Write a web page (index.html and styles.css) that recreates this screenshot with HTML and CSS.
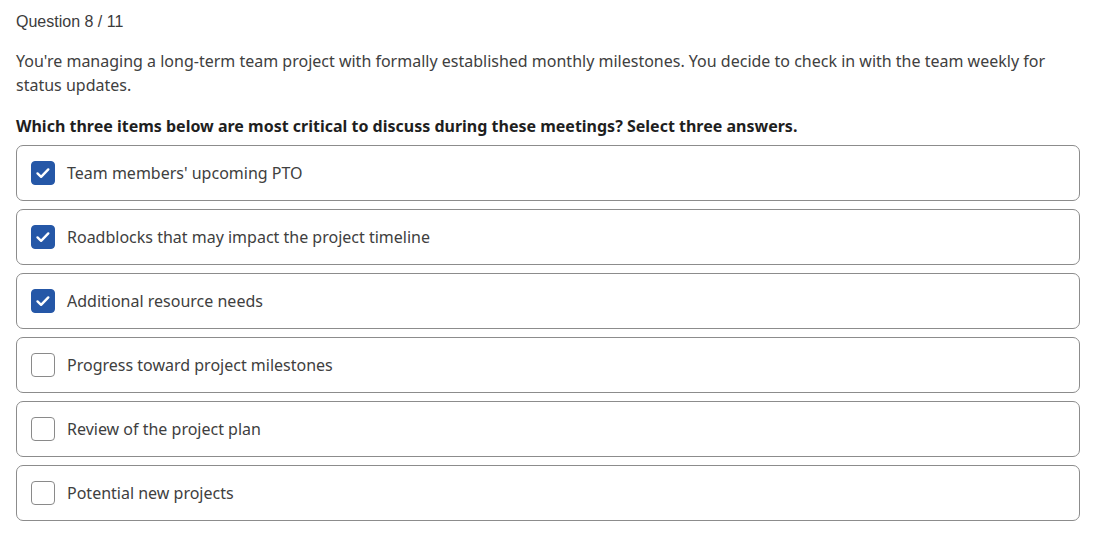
FILE: index.html
```html
<!DOCTYPE html>
<html lang="en">
<head>
<meta charset="utf-8">
<title>Question 8 / 11</title>
<link rel="stylesheet" href="styles.css">
</head>
<body>
<main class="quiz">
  <div class="counter">Question 8 / 11</div>
  <p class="stem">You're managing a long-term team project with formally established monthly milestones. You decide to check in with the team weekly for status updates.</p>
  <p class="prompt">Which three items below are most critical to discuss during these meetings? Select three answers.</p>
  <ul class="options">
    <li class="option checked"><span class="box"><svg viewBox="0 0 24 24" width="24" height="24"><path d="M6.5 12.4l3.6 3.4 7.2-7.4" fill="none" stroke="#fff" stroke-width="2.4" stroke-linecap="round" stroke-linejoin="round"/></svg></span><span class="label">Team members' upcoming PTO</span></li>
    <li class="option checked"><span class="box"><svg viewBox="0 0 24 24" width="24" height="24"><path d="M6.5 12.4l3.6 3.4 7.2-7.4" fill="none" stroke="#fff" stroke-width="2.4" stroke-linecap="round" stroke-linejoin="round"/></svg></span><span class="label">Roadblocks that may impact the project timeline</span></li>
    <li class="option checked"><span class="box"><svg viewBox="0 0 24 24" width="24" height="24"><path d="M6.5 12.4l3.6 3.4 7.2-7.4" fill="none" stroke="#fff" stroke-width="2.4" stroke-linecap="round" stroke-linejoin="round"/></svg></span><span class="label">Additional resource needs</span></li>
    <li class="option"><span class="box"></span><span class="label">Progress toward project milestones</span></li>
    <li class="option"><span class="box"></span><span class="label">Review of the project plan</span></li>
    <li class="option"><span class="box"></span><span class="label">Potential new projects</span></li>
  </ul>
</main>
</body>
</html>
```
FILE: styles.css
```css
html, body {
  margin: 0;
  background: #ffffff;
}
.quiz {
  width: 1064px;
  padding: 10px 0 0 16px;
  font-family: "Noto Sans", "Open Sans", sans-serif;
  color: #333333;
}
.counter {
  font-family: "Liberation Sans", Arial, sans-serif;
  font-size: 16px;
  line-height: 24px;
  color: #3c3c3c;
}
.stem {
  margin: 15px 0 0;
  font-size: 16px;
  line-height: 24px;
  color: #404040;
}
.prompt {
  margin: 17px 0 0;
  font-size: 16px;
  line-height: 24px;
  font-weight: 700;
  color: #1f1f1f;
}
.options {
  list-style: none;
  margin: 7px 0 0;
  padding: 0;
  display: flex;
  flex-direction: column;
  gap: 8px;
}
.option {
  box-sizing: border-box;
  height: 56px;
  border: 1px solid #8c8c8c;
  border-radius: 7px;
  padding: 0 14px;
  display: flex;
  align-items: center;
  gap: 12px;
  font-size: 16px;
  color: #404040;
}
.box {
  box-sizing: border-box;
  width: 24px;
  height: 24px;
  border: 1px solid #8a8a8a;
  border-radius: 4px;
  background: #fff;
  display: flex;
  flex: none;
}
.option.checked .box {
  background: #2557a7;
  border-color: #2557a7;
}
.box svg {
  display: block;
  margin: -1px;
}
```
